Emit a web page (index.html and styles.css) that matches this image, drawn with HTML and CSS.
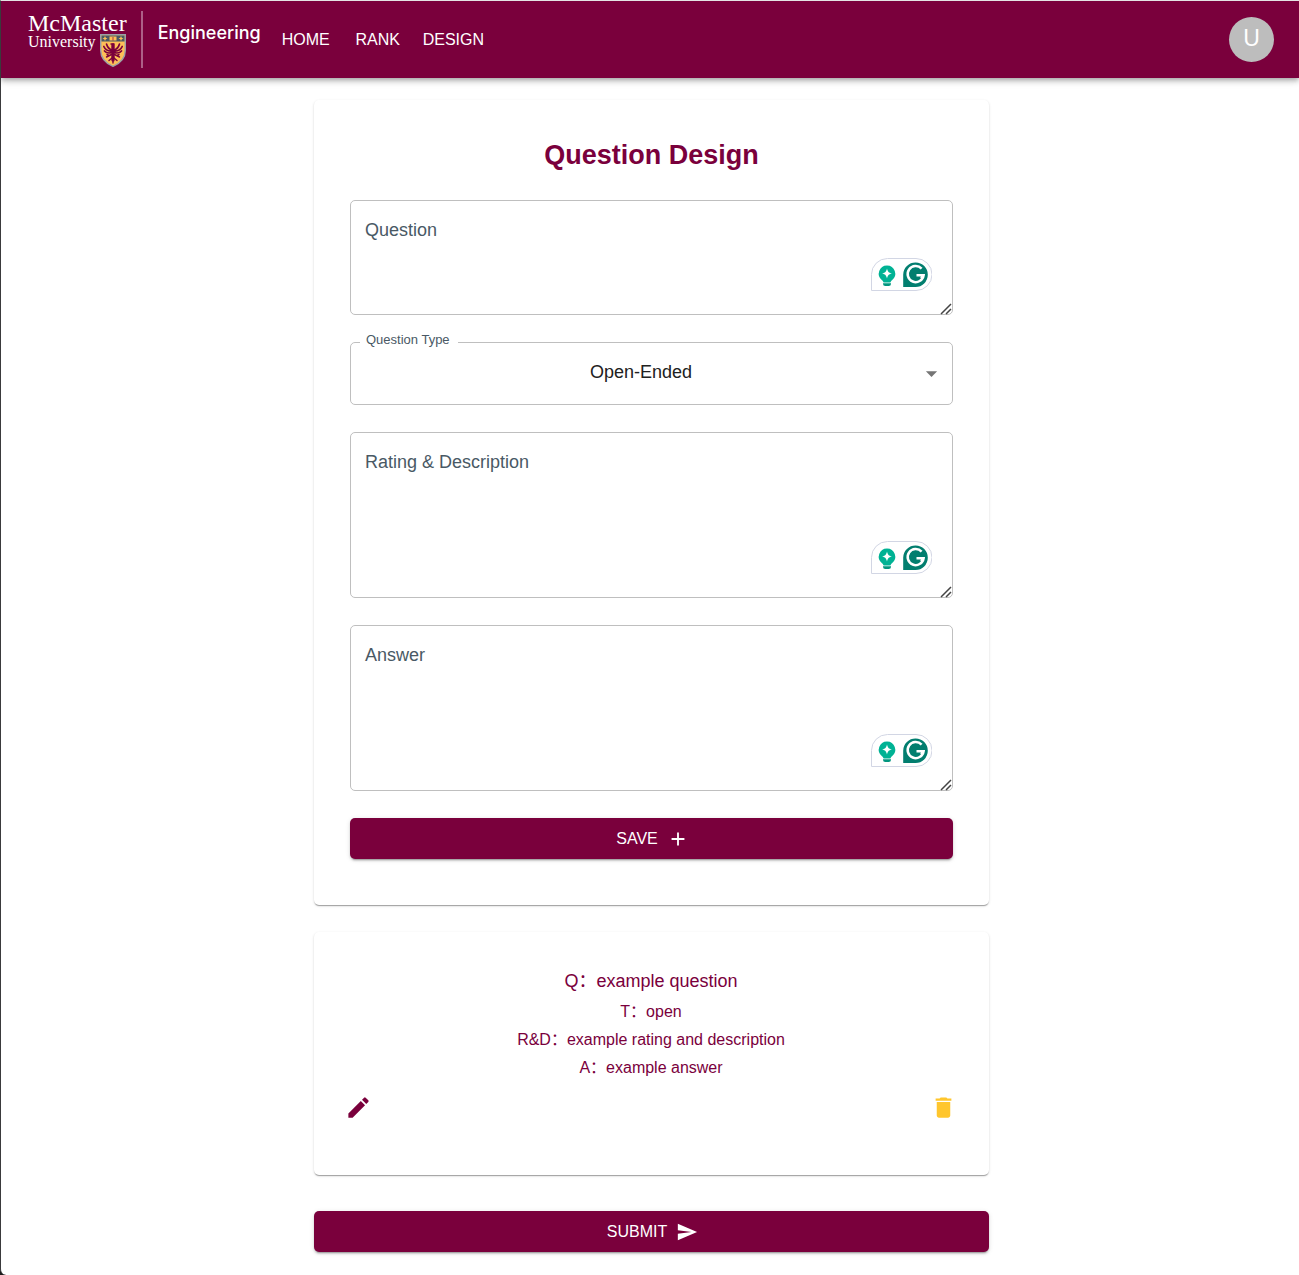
FILE: index.html
```html
<!DOCTYPE html>
<html lang="en">
<head>
<meta charset="utf-8">
<meta name="viewport" content="width=device-width, initial-scale=1">
<title>Question Design</title>
<link rel="stylesheet" href="styles.css">
</head>
<body>
<svg class="sprite" aria-hidden="true">
  <symbol id="assist" viewBox="0 0 61 33">
    <path d="M.5 32.500V16.500A16 16 0 0 1 16.500 .5H45A16 16 0 0 1 45 32.500Z" fill="#fff" stroke="#d2d6e4"/>
    <path d="M16 7.500a8.200 8.200 0 0 0-5 14.700c1 .8 1.300 1.500 1.600 2.300h6.800c.3-.8.600-1.500 1.600-2.300A8.200 8.200 0 0 0 16 7.500z" fill="#00b294"/>
    <path d="M12 25.300h8v.4a2.300 2.300 0 0 1-2.300 2.300h-3.400a2.300 2.300 0 0 1-2.300-2.300z" fill="#02967f"/>
    <path d="M16 10.500c.9 3.400 1.500 4.100 5 5-3.500.9-4.100 1.600-5 5-.9-3.400-1.500-4.100-5-5 3.500-.9 4.100-1.600 5-5z" fill="#fff"/>
    <path d="M32.200 29V16.500A12.300 12.300 0 1 1 44.500 29Z" fill="#027e6f"/>
    <path d="M50.600 10.700A8 8 0 1 0 52.600 17.300H45.500M52.700 17.300l-2.600 3" fill="none" stroke="#fff" stroke-width="2.500"/>
  </symbol>
  <symbol id="grip" viewBox="0 0 12 12">
    <path d="M1 11 11 1M6 11l5-5" fill="none" stroke="#444" stroke-width="1.500"/>
  </symbol>
</svg>

<header class="topbar">
  <a class="brand" href="#">
    <span class="brand-university">
      <span class="brand-name">McMaster</span>
      <span class="brand-sub">University</span>
      <svg class="crest" viewBox="0 0 26 33" aria-hidden="true">
        <path d="M.7.700h24.600v15.500c0 8-5 13-12.300 16.100C5.700 29.200.7 24.200.7 16.200z" fill="#fdbf57" stroke="#9aa0a8" stroke-width="1.400"/>
        <path d="M1.500 1.500h23v6h-23z" fill="#495965"/>
        <path d="M9.500 2.500h7v4h-7zM5 2l.8 1.700 1.700.8-1.700.8L5 7l-.8-1.700-1.700-.8 1.700-.8zM21 2l.8 1.700 1.700.8-1.700.8L21 7l-.8-1.700-1.700-.8 1.700-.8z" fill="#fdbf57"/>
        <path d="M13 3v3.500" stroke="#7a003c" stroke-width=".7"/>
        <g fill="none" stroke="#7a003c" stroke-linecap="round">
          <path d="M13 11v15" stroke-width="3.400"/>
          <path d="M12 16Q8 15 6.500 10M12 17Q6 17.500 3.800 12.500M12 18.500Q7 20 4.500 17M14 16q4-1 5.500-6M14 17q6 .5 8.200-4.500M14 18.500q5 1.500 7.500-1.500" stroke-width="1.700"/>
          <path d="M11.500 20.500l-5 2.500M14.500 20.500l5 2.500M12 24l-3 2.500M14 24l3 2.500M13 26v3M11 10h3M7 20.500l2 1M19 20.500l-2 1" stroke-width="1.400"/>
        </g>
      </svg>
    </span>
    <span class="brand-faculty">Engineering</span>
  </a>
  <nav class="nav">
    <a href="#">HOME</a>
    <a href="#">RANK</a>
    <a href="#">DESIGN</a>
  </nav>
  <button class="avatar" type="button" aria-label="Account">U</button>
</header>

<main class="page">
  <form class="column">
    <section class="card card-form">
      <h1>Question Design</h1>
      <div class="field">
        <textarea class="short" id="question"></textarea>
        <label for="question">Question</label>
        <svg class="assist" aria-hidden="true"><use href="#assist"/></svg>
        <svg class="grip" aria-hidden="true"><use href="#grip"/></svg>
      </div>
      <div class="field">
        <select id="type"><option>Open-Ended</option></select>
        <label class="raised" for="type">Question Type</label>
        <svg class="arrow" viewBox="0 0 24 24" aria-hidden="true"><path d="m7 10 5 5 5-5z"/></svg>
      </div>
      <div class="field">
        <textarea id="rating"></textarea>
        <label for="rating">Rating &amp; Description</label>
        <svg class="assist" aria-hidden="true"><use href="#assist"/></svg>
        <svg class="grip" aria-hidden="true"><use href="#grip"/></svg>
      </div>
      <div class="field">
        <textarea id="answer"></textarea>
        <label for="answer">Answer</label>
        <svg class="assist" aria-hidden="true"><use href="#assist"/></svg>
        <svg class="grip" aria-hidden="true"><use href="#grip"/></svg>
      </div>
      <button class="button" type="button">SAVE
        <svg viewBox="0 0 24 24" aria-hidden="true"><path d="M19 13h-6v6h-2v-6H5v-2h6V5h2v6h6z"/></svg>
      </button>
    </section>

    <section class="card card-entry">
      <p class="entry-question">Q：example question</p>
      <p>T：open</p>
      <p>R&amp;D：example rating and description</p>
      <p>A：example answer</p>
      <div class="entry-actions">
        <button class="icon-button edit" type="button" aria-label="Edit">
          <svg viewBox="0 0 24 24"><path d="M3 17.250V21h3.750L17.810 9.940l-3.750-3.750zM20.710 7.040c.39-.39.39-1.020 0-1.410l-2.340-2.340a.996.996 0 0 0-1.410 0l-1.830 1.830 3.750 3.750z"/></svg>
        </button>
        <button class="icon-button delete" type="button" aria-label="Delete">
          <svg viewBox="0 0 24 24"><path d="M6 19c0 1.100.9 2 2 2h8c1.100 0 2-.9 2-2V7H6zM19 4h-3.500l-1-1h-5l-1 1H5v2h14z"/></svg>
        </button>
      </div>
    </section>

    <button class="button" type="submit">SUBMIT
      <svg viewBox="0 0 24 24" aria-hidden="true"><path d="M2.010 21 23 12 2.010 3 2 10l15 2-15 2z"/></svg>
    </button>
  </form>
</main>
</body>
</html>
```
FILE: styles.css
```css
:root {
  --maroon: #7a003c;
  --gold: #ffc62d;
  --slate: #495965;
}

*,
*::before,
*::after {
  box-sizing: border-box;
}

html {
  background: #1c1c1c;
}

body {
  margin: 0;
  min-height: 100vh;
  background: #fff;
  border-top: 1px solid #e4e4e4;
  border-left: 1px solid #3a3a3c;
  border-bottom-left-radius: 6px;
  font: 16px/24px "Liberation Sans", Arial, "Noto Sans CJK SC", sans-serif;
}

button,
select,
textarea {
  font: inherit;
}

.sprite {
  display: none;
}

/* Top bar */

.topbar {
  display: flex;
  align-items: center;
  height: 77px;
  padding: 0 25px 0 27px;
  background: var(--maroon);
  color: #fff;
  box-shadow: 0 2px 4px -1px rgba(0, 0, 0, .2), 0 4px 5px rgba(0, 0, 0, .14), 0 1px 10px rgba(0, 0, 0, .12);
}

.brand {
  display: flex;
  color: inherit;
  text-decoration: none;
}

.brand-university {
  display: grid;
  grid-template-rows: 22px 35px;
  height: 57px;
  padding-right: 14px;
  border-right: 2px solid #ad6087;
  font-family: "Liberation Serif", "Times New Roman", serif;
}

.brand-name,
.brand-sub,
.crest {
  grid-column: 1;
}

.brand-name {
  font-size: 24px;
  line-height: 24px;
}

.brand-sub {
  grid-row: 2;
  font-size: 16px;
  line-height: 18px;
}

.crest {
  grid-row: 2;
  align-self: end;
  justify-self: end;
  width: 26px;
  height: 33px;
  margin: 0 1px 1px 0;
}

.brand-faculty {
  padding: 10px 0 0 15px;
  font: 500 18px/24px Inter, sans-serif;
}

.nav {
  display: flex;
  margin-left: 9px;
}

.nav a {
  min-width: 72px;
  padding: 7px 9px;
  color: inherit;
  text-align: center;
  text-decoration: none;
}

.avatar {
  width: 45px;
  height: 45px;
  margin-left: auto;
  padding: 0 0 3px;
  border: 0;
  border-radius: 50%;
  background: #bdbdbd;
  color: #fff;
  font-size: 23px;
  line-height: 24px;
}

/* Page column */

.page {
  padding: 22px 0 23px 3px;
}

.column {
  display: flex;
  flex-direction: column;
  max-width: 675px;
  margin: 0 auto;
}

.card {
  border-radius: 5px;
  background: #fff;
  box-shadow: 0 2px 1px -1px rgba(0, 0, 0, .2), 0 1px 1px rgba(0, 0, 0, .14), 0 1px 3px rgba(0, 0, 0, .12);
}

.card-form {
  display: flex;
  flex-direction: column;
  gap: 27px;
  padding: 37px 36px 46px;
}

h1 {
  margin: 0;
  color: var(--maroon);
  font-size: 27px;
  line-height: 36px;
  text-align: center;
}

/* Form fields */

.field {
  position: relative;
}

.field label {
  position: absolute;
  top: 18px;
  left: 15px;
  color: var(--slate);
  font-size: 18px;
}

.field .raised {
  top: -9px;
  left: 10px;
  padding: 0 8px 0 6px;
  background: #fff;
  font-size: 13px;
  line-height: 14px;
}

textarea,
select {
  display: block;
  width: 100%;
  border: 1px solid #bfbfbf;
  border-radius: 5px;
  background: #fff;
  font-size: 18px;
}

textarea {
  height: 166px;
  padding: 18px 15px;
  resize: vertical;
}

textarea::-webkit-resizer {
  background: transparent;
}

textarea.short {
  height: 115px;
}

select {
  height: 63px;
  padding: 0 36px 4px 15px;
  appearance: none;
  color: #212121;
  text-align: center;
  text-align-last: center;
}

.assist {
  position: absolute;
  right: 21px;
  bottom: 24px;
  width: 61px;
  height: 33px;
}

.grip {
  position: absolute;
  right: 1px;
  bottom: 0;
  width: 12px;
  height: 12px;
  pointer-events: none;
}

.arrow {
  position: absolute;
  top: 18px;
  right: 8px;
  width: 27px;
  height: 27px;
  fill: #757575;
  pointer-events: none;
}

/* Buttons */

.button {
  display: flex;
  align-items: center;
  justify-content: center;
  gap: 9px;
  height: 41px;
  padding: 0 15px 0 17px;
  border: 0;
  border-radius: 5px;
  background: var(--maroon);
  color: #fff;
  box-shadow: 0 3px 1px -2px rgba(0, 0, 0, .2), 0 2px 2px rgba(0, 0, 0, .14), 0 1px 5px rgba(0, 0, 0, .12);
}

.button svg {
  width: 22px;
  height: 22px;
  fill: currentColor;
}

/* Saved question */

.card-entry {
  margin: 27px 0 36px;
  padding: 32px 23px 45px 22px;
  color: var(--maroon);
  text-align: center;
}

.card-entry p {
  margin: 0;
  line-height: 28px;
}

.card-entry .entry-question {
  font-size: 18px;
  line-height: 34px;
}

.entry-actions {
  display: flex;
  justify-content: space-between;
  padding-top: 3px;
}

.icon-button {
  display: flex;
  padding: 9px;
  border: 0;
  background: none;
}

.icon-button svg {
  width: 27px;
  height: 27px;
  fill: currentColor;
}

.edit {
  color: var(--maroon);
}

.delete {
  color: var(--gold);
}
```
